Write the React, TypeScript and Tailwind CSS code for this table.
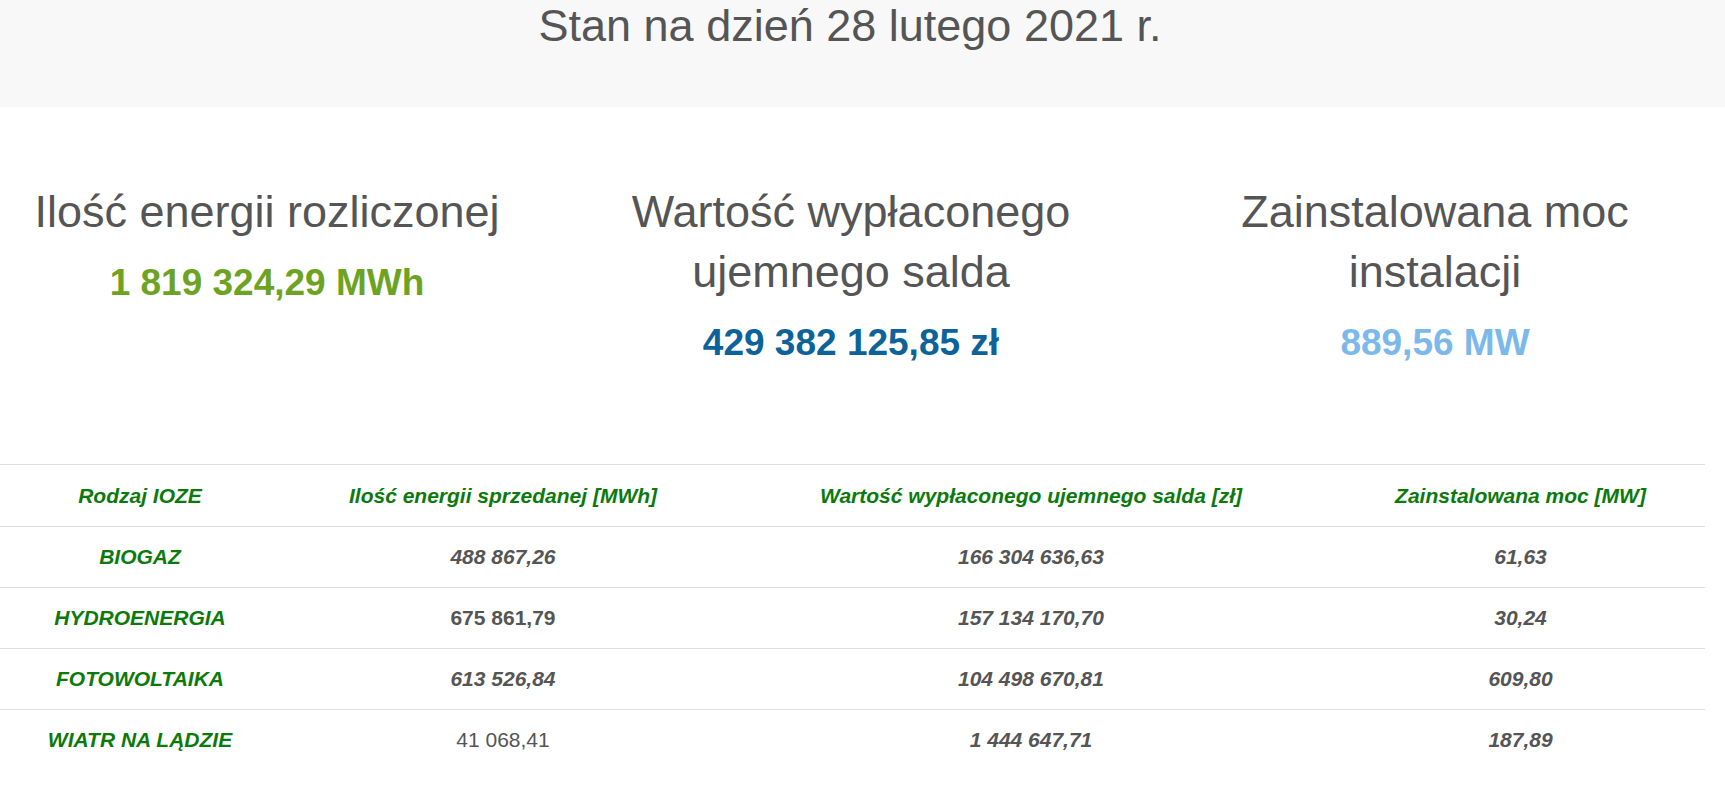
const stats = [
  { label: ["Ilość energii rozliczonej"], value: "1 819 324,29 MWh", color: "text-[#6ca322]" },
  { label: ["Wartość wypłaconego", "ujemnego salda"], value: "429 382 125,85 zł", color: "text-[#0d6399]" },
  { label: ["Zainstalowana moc", "instalacji"], value: "889,56 MW", color: "text-[#7bb9ea]" },
];

// per-cell styling copied from the source page (it is not consistent)
const rows = [
  { kind: "BIOGAZ", cells: [["488 867,26", "bi"], ["166 304 636,63", "bi"], ["61,63", "bi"]] },
  { kind: "HYDROENERGIA", cells: [["675 861,79", "b"], ["157 134 170,70", "bi"], ["30,24", "bi"]] },
  { kind: "FOTOWOLTAIKA", cells: [["613 526,84", "bi"], ["104 498 670,81", "bi"], ["609,80", "bi"]] },
  { kind: "WIATR NA LĄDZIE", cells: [["41 068,41", ""], ["1 444 647,71", "bi"], ["187,89", "bi"]] },
];

function cellClass(style: string) {
  if (style === "bi") return "font-bold italic";
  if (style === "b") return "font-bold";
  return "font-normal";
}

export default function App() {
  return (
    <div className="min-h-[786px] bg-white font-['Liberation_Sans',Arial,sans-serif] text-[#555555]">
      <div className="h-[107px] bg-[#f8f8f8]">
        <h1 className="w-[1700px] text-center text-[45px] leading-[52px]">Stan na dzień 28 lutego 2021 r.</h1>
      </div>

      <div className="grid grid-cols-[534px_634px_534px] pt-[75px] pb-[100px]">
        {stats.map((s) => (
          <div key={s.value} className="text-center">
            <h3 className="text-[45px] leading-[60px]">
              {s.label.map((l) => (
                <div key={l}>{l}</div>
              ))}
            </h3>
            <div className={`mt-[20px] text-[37px] font-bold leading-[42px] ${s.color}`}>{s.value}</div>
          </div>
        ))}
      </div>

      <table className="w-[1705px] table-fixed border-collapse text-center text-[21px] leading-[24px]">
        <colgroup>
          <col className="w-[280px]" />
          <col className="w-[446px]" />
          <col className="w-[610px]" />
          <col className="w-[369px]" />
        </colgroup>
        <thead>
          <tr className="h-[62px] border-t border-[#dddddd] font-bold italic text-[#0b7a0b]">
            <th className="font-bold">Rodzaj IOZE</th>
            <th className="font-bold">Ilość energii sprzedanej [MWh]</th>
            <th className="font-bold">Wartość wypłaconego ujemnego salda [zł]</th>
            <th className="font-bold">Zainstalowana moc [MW]</th>
          </tr>
        </thead>
        <tbody>
          {rows.map((r) => (
            <tr key={r.kind} className="h-[61px] border-t border-[#dddddd]">
              <td className="font-bold italic text-[#0b7a0b]">{r.kind}</td>
              {r.cells.map(([v, st], i) => (
                <td key={i} className={cellClass(st)}>
                  {v}
                </td>
              ))}
            </tr>
          ))}
        </tbody>
      </table>
    </div>
  );
}
